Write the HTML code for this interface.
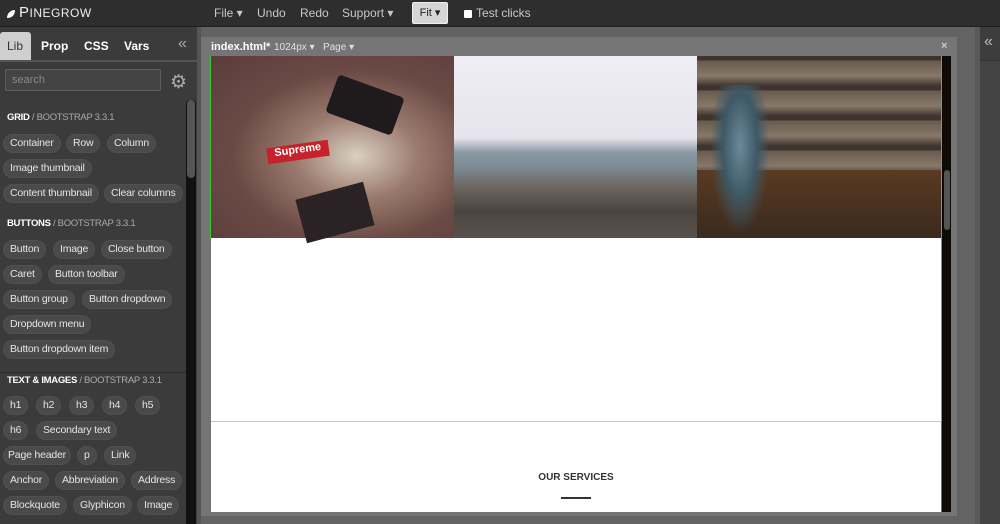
<!DOCTYPE html>
<html><head><style>
*{margin:0;padding:0;box-sizing:border-box}
body{width:1000px;height:524px;overflow:hidden;background:#636363;font-family:"Liberation Sans",sans-serif;position:relative}
.abs{position:absolute}
#top{left:0;top:0;width:1000px;height:27px;background:#2e2e2e;border-bottom:1px solid #1e1e1e}
.menu{top:6px;color:#c8c8c8;font-size:12px}
#left{left:0;top:27px;width:197px;height:497px;background:#3b3b3b}
.tab{top:6px;font-size:12px;color:#fff;font-weight:bold}
.hd{font-size:9.5px;color:#fff;left:7px;letter-spacing:-0.3px}
.hd span{color:#aaa;font-weight:normal}
.p{position:absolute;height:19px;line-height:17px;border:1px solid #505050;background:#4a4a4a;border-radius:10px;color:#e4e4e4;font-size:10.5px;padding:0 6px;white-space:nowrap;letter-spacing:-0.2px}
</style></head><body>
<div id="top" class="abs">
  <svg class="abs" style="left:6px;top:9px" width="10" height="10"><path d="M1 9 C1 4 5 1 9 1 C9 6 6 9 1 9Z" fill="#fff"/></svg>
  <div class="abs" style="left:19px;top:4px;color:#eee;font-size:15px;letter-spacing:0.5px">P<span style="font-size:12px">INEGROW</span></div>
  <div class="abs menu" style="left:214px">File ▾</div>
  <div class="abs menu" style="left:257px">Undo</div>
  <div class="abs menu" style="left:300px">Redo</div>
  <div class="abs menu" style="left:342px">Support ▾</div>
  <div class="abs" style="left:412px;top:2px;width:36px;height:22px;background:#d6d6d6;border:1px solid #eee;border-radius:2px;font-size:11px;color:#222;text-align:center;line-height:20px">Fit ▾</div>
  <div class="abs" style="left:464px;top:10px;width:8px;height:8px;background:#fff;border-radius:1px"></div>
  <div class="abs menu" style="left:476px">Test clicks</div>
</div>
<div id="left" class="abs">
  <div class="abs" style="left:0;top:5px;width:31px;height:28px;background:#cfcfcf;border-radius:3px 3px 0 0"></div>
  <div class="abs tab" style="left:7px;top:12px;color:#333;font-weight:normal">Lib</div>
  <div class="abs tab" style="left:41px;top:12px">Prop</div>
  <div class="abs tab" style="left:84px;top:12px">CSS</div>
  <div class="abs tab" style="left:124px;top:12px">Vars</div>
  <div class="abs" style="left:178px;top:8px;color:#aaa;font-size:16px">«</div>
  <div class="abs" style="left:0;top:33px;width:197px;height:2px;background:#555"></div>
  <div class="abs" style="left:5px;top:42px;width:156px;height:22px;background:#444;border:1px solid #5e5e5e;border-radius:2px;color:#888;font-size:11px;padding:4px 6px">search</div>
  <div class="abs" style="left:170px;top:44px;color:#aaa;font-size:19px">⚙</div>
  <div class="abs" style="left:186px;top:73px;width:10px;height:424px;background:#111;border-radius:4px 4px 0 0"></div>
  <div class="abs" style="left:187px;top:73px;width:8px;height:78px;background:#555;border-radius:4px"></div>
  <div class="abs hd" style="top:85px"><b>GRID</b> <span>/ BOOTSTRAP 3.3.1</span></div>
  <div class="p" style="left:3px;top:107px">Container</div>
  <div class="p" style="left:66px;top:107px">Row</div>
  <div class="p" style="left:107px;top:107px">Column</div>
  <div class="p" style="left:3px;top:132px">Image thumbnail</div>
  <div class="p" style="left:3px;top:157px">Content thumbnail</div>
  <div class="p" style="left:104px;top:157px">Clear columns</div>
  <div class="abs hd" style="top:191px"><b>BUTTONS</b> <span>/ BOOTSTRAP 3.3.1</span></div>
  <div class="p" style="left:3px;top:213px">Button</div>
  <div class="p" style="left:53px;top:213px">Image</div>
  <div class="p" style="left:101px;top:213px">Close button</div>
  <div class="p" style="left:3px;top:238px">Caret</div>
  <div class="p" style="left:48px;top:238px">Button toolbar</div>
  <div class="p" style="left:3px;top:263px">Button group</div>
  <div class="p" style="left:82px;top:263px">Button dropdown</div>
  <div class="p" style="left:3px;top:288px">Dropdown menu</div>
  <div class="p" style="left:3px;top:313px">Button dropdown item</div>
  <div class="abs" style="left:0;top:345px;width:186px;height:1px;background:#2a2a2a"></div>
  <div class="abs hd" style="top:348px"><b>TEXT &amp; IMAGES</b> <span>/ BOOTSTRAP 3.3.1</span></div>
  <div class="p" style="left:3px;top:369px">h1</div>
  <div class="p" style="left:36px;top:369px">h2</div>
  <div class="p" style="left:69px;top:369px">h3</div>
  <div class="p" style="left:102px;top:369px">h4</div>
  <div class="p" style="left:135px;top:369px">h5</div>
  <div class="p" style="left:3px;top:394px">h6</div>
  <div class="p" style="left:36px;top:394px">Secondary text</div>
  <div class="p" style="left:3px;top:419px;padding:0 4px">Page header</div>
  <div class="p" style="left:77px;top:419px">p</div>
  <div class="p" style="left:104px;top:419px">Link</div>
  <div class="p" style="left:3px;top:444px">Anchor</div>
  <div class="p" style="left:55px;top:444px">Abbreviation</div>
  <div class="p" style="left:131px;top:444px">Address</div>
  <div class="p" style="left:3px;top:469px">Blockquote</div>
  <div class="p" style="left:73px;top:469px">Glyphicon</div>
  <div class="p" style="left:137px;top:469px">Image</div>
</div>
<div class="abs" style="left:197px;top:27px;width:4px;height:497px;background:#555"></div>
<div class="abs" style="left:201px;top:37px;width:756px;height:479px;background:#757575"></div>
<div class="abs" style="left:211px;top:41px;color:#fff;font-size:11px;font-weight:bold">index.html*</div>
<div class="abs" style="left:274px;top:42px;color:#e0e0e0;font-size:10px">1024px ▾ &nbsp;&nbsp;Page ▾</div>
<div class="abs" style="left:941px;top:40px;color:#ccc;font-size:11px;font-weight:bold">×</div>
<div class="abs" style="left:211px;top:56px;width:730px;height:456px;background:#fff"></div>
<div class="abs" style="left:211px;top:56px;width:243px;height:182px;background:radial-gradient(ellipse at 60% 55%,#d9d0c2 0,#9b7a6e 30%,#6b4a45 60%,#5a3c3c 100%)"></div>
<div class="abs" style="left:330px;top:85px;width:70px;height:40px;background:#1f1a1c;transform:rotate(20deg);border-radius:4px"></div>
<div class="abs" style="left:267px;top:144px;width:62px;height:16px;background:#c5222b;color:#fff;font-size:11px;font-weight:bold;text-align:center;transform:rotate(-8deg)">Supreme</div>
<div class="abs" style="left:300px;top:190px;width:70px;height:45px;background:#2a2224;transform:rotate(-15deg)"></div>
<div class="abs" style="left:454px;top:56px;width:243px;height:182px;background:linear-gradient(#f0eef4 0,#e6e4ec 45%,#8a9aa5 53%,#7a8890 62%,#6c6660 72%,#4b4440 85%,#5a524c 100%)"></div>
<div class="abs" style="left:697px;top:56px;width:244px;height:182px;background:repeating-linear-gradient(#2a1f18 0,#2a1f18 4px,#5a4a3a 5px,#7a6a5a 20px,#2a1f18 30px),#3a2e28;opacity:0.9"></div>
<div class="abs" style="left:697px;top:170px;width:244px;height:68px;background:linear-gradient(#5a3a22,#3a2a1e)"></div>
<div class="abs" style="left:710px;top:85px;width:60px;height:150px;background:radial-gradient(ellipse at 50% 40%,#6b8a9a 0,#3e5866 40%,transparent 70%)"></div>
<div class="abs" style="left:211px;top:421px;width:730px;height:1px;background:#8e8"></div>
<div class="abs" style="left:210px;top:56px;width:1px;height:182px;background:#3c3"></div>
<div class="abs" style="left:941px;top:56px;width:1px;height:366px;background:#3c3"></div>
<div class="abs" style="left:942px;top:56px;width:9px;height:456px;background:#0e0a05"></div>
<div class="abs" style="left:944px;top:170px;width:6px;height:60px;background:#555;border-radius:3px"></div>
<div class="abs" style="left:0;top:472px;width:1000px;text-align:center;font-size:10px;font-weight:bold;color:#333;padding-left:152px">OUR SERVICES</div>
<div class="abs" style="left:561px;top:497px;width:30px;height:2px;background:#333"></div>
<div class="abs" style="left:975px;top:27px;width:5px;height:497px;background:#595959"></div>
<div class="abs" style="left:980px;top:27px;width:20px;height:497px;background:#444"></div>
<div class="abs" style="left:980px;top:27px;width:20px;height:34px;background:#3d3d3d;border-bottom:1px solid #333"></div>
<div class="abs" style="left:984px;top:33px;color:#bbb;font-size:16px">«</div>
</body></html>
